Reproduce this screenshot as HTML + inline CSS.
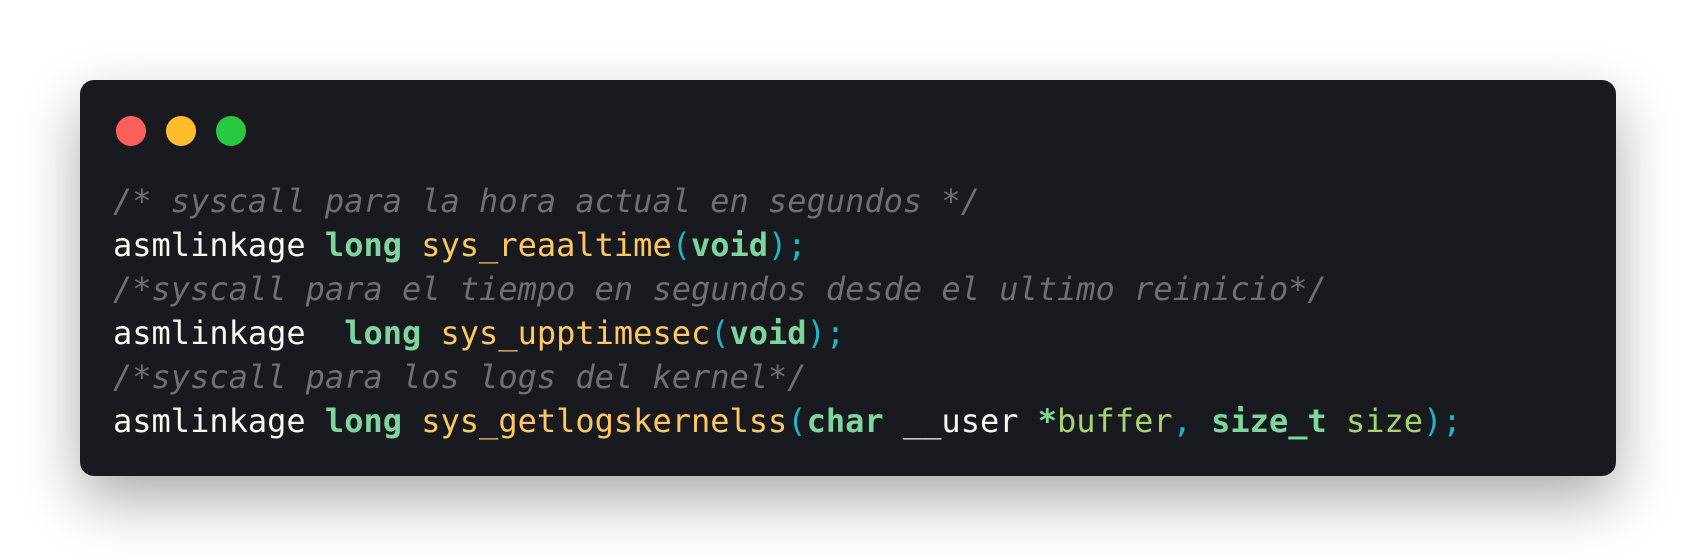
<!DOCTYPE html>
<html><head><meta charset="utf-8"><style>
html,body{margin:0;padding:0;background:#fff;width:1696px;height:556px;overflow:hidden}
.win{position:absolute;left:80px;top:80px;width:1536px;height:396px;background:#191a1f;border-radius:14px;box-shadow:0 24px 60px rgba(0,0,0,0.33)}
.dot{position:absolute;top:36px;width:30px;height:30px;border-radius:50%}
pre{position:absolute;left:33px;top:99px;margin:0;font-family:"DejaVu Sans Mono","Liberation Mono",monospace;font-size:32px;line-height:44px;color:#f8f8f2}
.c{color:#6f6f74;font-style:italic}
.k{color:#7ed69e;font-weight:bold}
.f{color:#ffc862}
.p{color:#21b5c9}
.a{color:#a5d36e}
</style></head><body>
<div class="win">
<div class="dot" style="left:36px;background:#ff5f5a"></div>
<div class="dot" style="left:86px;background:#ffbd2e"></div>
<div class="dot" style="left:136px;background:#28c840"></div>
<pre><span class="c">/* syscall para la hora actual en segundos */</span>
asmlinkage <span class="k">long</span> <span class="f">sys_reaaltime</span><span class="p">(</span><span class="k">void</span><span class="p">);</span>
<span class="c">/*syscall para el tiempo en segundos desde el ultimo reinicio*/</span>
asmlinkage  <span class="k">long</span> <span class="f">sys_upptimesec</span><span class="p">(</span><span class="k">void</span><span class="p">);</span>
<span class="c">/*syscall para los logs del kernel*/</span>
asmlinkage <span class="k">long</span> <span class="f">sys_getlogskernelss</span><span class="p">(</span><span class="k">char</span> __user <span class="k">*</span><span class="a">buffer</span><span class="p">,</span> <span class="k">size_t</span> <span class="a">size</span><span class="p">);</span></pre>
</div>
</body></html>
